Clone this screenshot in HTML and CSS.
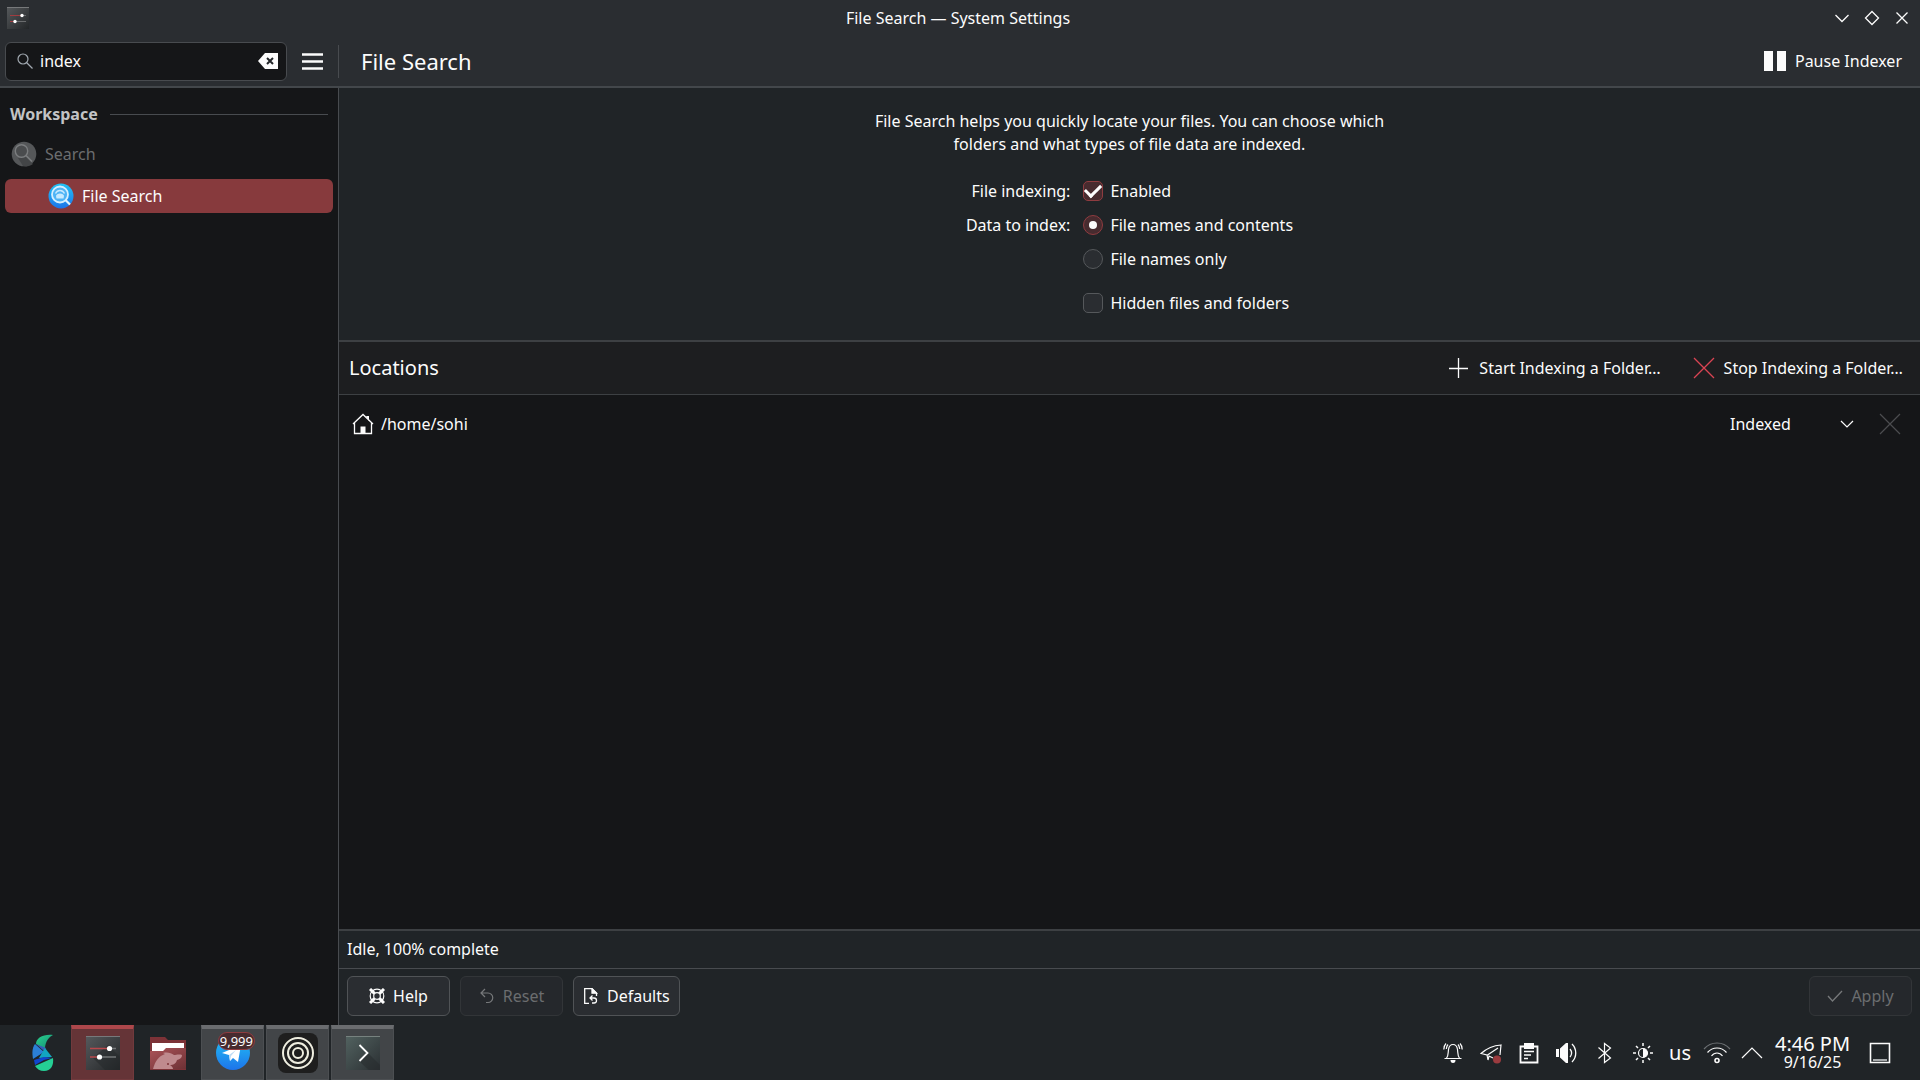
FILE: index.html
```html
<!DOCTYPE html>
<html lang="en">
<head>
  <meta charset="UTF-8" />
  <meta name="viewport" content="width=device-width, initial-scale=1.0"/>
  <title>File Search — System Settings</title>
  <link rel="stylesheet" href="styles.css">
</head>
<body>
  <header class="titlebar">
    <svg class="app-icon" width="24" height="24" viewBox="0 0 24 24">
      <defs>
        <linearGradient id="tile" x1="0" y1="0" x2="1" y2="1">
          <stop offset="0" stop-color="#56595c"/>
          <stop offset="1" stop-color="#232628"/>
        </linearGradient>
      </defs>
      <rect x="1" y="1" width="22" height="22" fill="url(#tile)"/>
      <path d="M1 1.500h22" stroke="#77797b"/>
      <path d="M4 9.500h12M4 15.500h5" stroke="#a03c40"/>
      <path d="M16 9.500h4M9 15.500h11" stroke="#6a6c6e"/>
      <circle cx="16" cy="9.500" r="1.700" fill="#fff"/>
      <circle cx="9" cy="15.500" r="1.700" fill="#fff"/>
    </svg>
    <h1>File Search — System Settings</h1>
    <div class="window-buttons">
      <button aria-label="Minimize"><svg width="16" height="16" viewBox="0 0 16 16"><path d="M1.500 5l6.500 6.500L14.500 5"/></svg></button>
      <button aria-label="Maximize"><svg width="16" height="16" viewBox="0 0 16 16"><path d="M8 1.500L14.500 8 8 14.500 1.500 8z"/></svg></button>
      <button aria-label="Close"><svg width="16" height="16" viewBox="0 0 16 16"><path d="M2.500 2.500l11 11M13.500 2.500l-11 11"/></svg></button>
    </div>
  </header>

  <div class="toolbar">
    <div class="toolbar-left">
      <div class="search-box">
        <svg width="16" height="16" viewBox="0 0 16 16" fill="none" stroke="#a1a9b1" stroke-width="1.200"><circle cx="6" cy="6" r="5"/><path d="M9.500 9.500l6 6"/></svg>
        <input type="text" value="index" aria-label="Search">
        <button aria-label="Clear search">
          <svg width="20" height="16" viewBox="0 0 20 16"><path d="M0 8l7-8h13v16H7z" fill="#fcfcfc"/><path d="M9 5l6 6M15 5l-6 6" stroke="#232629" stroke-width="2"/></svg>
        </button>
      </div>
      <button class="menu-button" aria-label="Menu">
        <svg width="22" height="18" viewBox="0 0 22 18"><path d="M1 2.500h21M1 9.500h21M1 16.500h21" stroke="#fcfcfc" stroke-width="2.600"/></svg>
      </button>
    </div>
    <div class="toolbar-right">
      <h2>File Search</h2>
      <button class="flat-button">
        <svg width="22" height="22" viewBox="0 0 22 22"><path d="M0 1h9v20H0zM13 1h9v20h-9z" fill="#fcfcfc"/></svg>
        Pause Indexer
      </button>
    </div>
  </div>

  <div class="window">
    <nav class="sidebar">
      <div class="section-title"><span>Workspace</span></div>
      <a href="#" class="nav-item disabled">
        <svg width="26" height="26" viewBox="0 0 26 26">
          <circle cx="13" cy="13" r="12.300" fill="#555759"/>
          <path d="M15 16l7 7c-3 2.500-7 2.800-10 2L7 17z" fill="#434547"/>
          <circle cx="10.500" cy="10" r="6.200" fill="#4a4c4e" stroke="#7b7d7f" stroke-width="1.400"/>
          <path d="M15 14.500l6 6" stroke="#7b7d7f" stroke-width="1.600"/>
        </svg>
        Search
      </a>
      <a href="#" class="nav-item child active">
        <svg width="26" height="26" viewBox="0 0 26 26">
          <defs>
            <linearGradient id="blue" x1="0" y1="0" x2="0" y2="1">
              <stop offset="0" stop-color="#22c3f5"/>
              <stop offset="1" stop-color="#1d74ea"/>
            </linearGradient>
          </defs>
          <circle cx="13" cy="13" r="12.500" fill="url(#blue)"/>
          <circle cx="12" cy="11.500" r="8" fill="#4fb4f5" stroke="#d5efff" stroke-width="1.800"/>
          <path d="M8 13c0-1.600 2-2.600 4-2.600s4 1 4 2.600l-.500 2.500h-7z" fill="#c7eaff"/>
          <path d="M7.500 10.500c1-2 2.500-3 4.500-3s3.500 1 4.500 3" fill="none" stroke="#c7eaff" stroke-width="1.400"/>
          <path d="M17.500 17l4.500 4.500" stroke="#e0f3ff" stroke-width="2.200"/>
        </svg>
        File Search
      </a>
    </nav>

    <main class="content">
      <section class="settings">
        <p>File Search helps you quickly locate your files. You can choose which folders and what types of file data are indexed.</p>
        <form class="options">
          <span class="caption">File indexing:</span>
          <label><input type="checkbox" checked> Enabled</label>
          <span class="caption">Data to index:</span>
          <label><input type="radio" name="data" checked> File names and contents</label>
          <label class="second"><input type="radio" name="data"> File names only</label>
          <label class="second spaced"><input type="checkbox"> Hidden files and folders</label>
        </form>
      </section>

      <section class="locations">
        <div class="locations-header">
          <h3>Locations</h3>
          <button class="flat-button">
            <svg width="22" height="22" viewBox="0 0 22 22"><path d="M10.500 1v20M1 11.500h19" stroke="#fcfcfc" stroke-width="1.300"/></svg>
            Start Indexing a Folder…
          </button>
          <button class="flat-button">
            <svg width="22" height="22" viewBox="0 0 22 22"><path d="M1 1l20 20M21 1L1 21" stroke="#da4453" stroke-width="1.300"/></svg>
            Stop Indexing a Folder…
          </button>
        </div>
        <div class="location-row">
          <svg width="22" height="22" viewBox="0 0 22 22">
            <path d="M2.500 9.500v11h17v-11M1 11l10-9.500L21 11" fill="none" stroke="#fcfcfc" stroke-width="1.300"/>
            <path d="M14 3h3v5zM8.500 13.500h5v7h-5z" fill="#fcfcfc"/>
          </svg>
          <span class="path">/home/sohi</span>
          <div class="select-box">
            <select aria-label="Indexing status">
              <option>Indexed</option>
              <option>Not indexed</option>
            </select>
            <svg width="14" height="14" viewBox="0 0 14 14"><path d="M1 4l6 6 6-6" fill="none" stroke="#fcfcfc" stroke-width="1.200"/></svg>
          </div>
          <button class="remove" aria-label="Remove" disabled>
            <svg width="22" height="22" viewBox="0 0 22 22"><path d="M1 1l20 20M21 1L1 21" stroke="#4b4d4f" stroke-width="1.200"/></svg>
          </button>
        </div>
      </section>

      <div class="status">Idle, 100% complete</div>

      <footer class="actions">
        <button>
          <svg width="16" height="16" viewBox="0 0 16 16" fill="none" stroke="#fcfcfc">
            <circle cx="8" cy="8" r="6.800" stroke-width="1.200"/>
            <circle cx="8" cy="8" r="3.300" stroke-width="1.200"/>
            <path d="M1 1l4.600 4.600M15 1l-4.600 4.600M1 15l4.600-4.600M15 15l-4.600-4.600" stroke-width="3"/>
          </svg>
          Help
        </button>
        <button disabled>
          <svg width="16" height="16" viewBox="0 0 16 16" fill="none" stroke="#77797b" stroke-width="1.200"><path d="M6 1L2 5l4 4M2 5h7a4.700 4.700 0 0 1 0 9.500H7"/></svg>
          Reset
        </button>
        <button>
          <svg width="16" height="16" viewBox="0 0 16 16" fill="none" stroke="#fcfcfc" stroke-width="1.300">
            <path d="M6 15.300H1.700V.700H9l4.500 4.500V8"/>
            <path d="M9 .700v4.500h4.500z" fill="#fcfcfc"/>
            <path d="M9.500 7.500L7 10l2.500 2.500M7 10h4a2.500 2.500 0 0 1 0 5H9"/>
          </svg>
          Defaults
        </button>
        <button class="apply" disabled>
          <svg width="16" height="16" viewBox="0 0 16 16" fill="none" stroke="#77797b" stroke-width="1.300"><path d="M1 8l4.500 5L15 3"/></svg>
          Apply
        </button>
      </footer>
    </main>
  </div>

  <div class="taskbar">
    <div class="tasks">
      <button class="launcher" aria-label="Application launcher">
        <svg width="24" height="38" viewBox="0 0 24 38">
          <defs>
            <linearGradient id="drop" x1="0" y1="0" x2="1" y2="1">
              <stop offset="0" stop-color="#2bd08c"/>
              <stop offset="1" stop-color="#128f78"/>
            </linearGradient>
          </defs>
          <path d="M22 1C12 0 5 4 5 10l9 5c0-5 2-11 8-14z" fill="url(#drop)"/>
          <path d="M4 10c-3 4-3 9-2 15L13 18z" fill="#2b7fd6"/>
          <path d="M5 10l8 7 2-3z" fill="#3560b8"/>
          <path d="M14 14l7 9-13 1z" fill="#12a5c0"/>
          <path d="M3 26l10-3 8 1-8 2-9 5z" fill="#0f46cf"/>
          <path d="M22 24c1 7-2 13-9 13-4 0-7-2-9-5z" fill="#25cf95"/>
        </svg>
      </button>
      <button class="task active" aria-label="System Settings">
        <svg width="36" height="36" viewBox="0 0 36 36">
          <rect x="1" y="1" width="34" height="34" fill="url(#tile)"/>
          <path d="M8 23l15-13 12 12v13H20z" fill="#242729" opacity=".5"/>
          <path d="M1 1.500h34" stroke="#77797b"/>
          <path d="M5 13.500h20M5 22h9" stroke="#b8484c" stroke-width="1.500"/>
          <path d="M25 13.500h6M14 22h17" stroke="#737577" stroke-width="1.500"/>
          <circle cx="24.500" cy="13.500" r="2.600" fill="#fff"/>
          <circle cx="14.500" cy="22" r="2.600" fill="#fff"/>
        </svg>
      </button>
      <button class="task plain" aria-label="Dolphin">
        <svg width="38" height="36" viewBox="0 0 38 36">
          <defs>
            <linearGradient id="folder" x1="0" y1="0" x2="1" y2="1">
              <stop offset="0" stop-color="#ac5459"/>
              <stop offset="1" stop-color="#6d3135"/>
            </linearGradient>
          </defs>
          <path d="M1 2h15l3 3h18v15H1z" fill="#7c3237"/>
          <path d="M3 8h32v12H3z" fill="#fff"/>
          <path d="M1 16h13l3-3h20v21H1z" fill="url(#folder)"/>
          <path d="M4 34c2-8 6-13 12-15l-2-1c5-1 8 0 11 2 2 0 5-1 8 0 0 3-2 4-5 5-1 4-4 5-7 5 2 1 3 3 3 4z" fill="#bf8a8e"/>
          <circle cx="19" cy="29" r="1" fill="#7c3237"/>
          <path d="M1 34.500h36" stroke="#7c3237"/>
        </svg>
      </button>
      <button class="task" aria-label="Telegram">
        <svg width="36" height="36" viewBox="0 0 36 36">
          <circle cx="18" cy="18" r="17" fill="url(#blue)"/>
          <path d="M7 18l19-8-3 17-5-4-3 3-1-6z" fill="#fff"/>
          <path d="M14 20l7-5-5 6-1 5z" fill="#bfdcf5"/>
        </svg>
        <span class="badge">9,999</span>
      </button>
      <button class="task" aria-label="Rings">
        <svg width="40" height="40" viewBox="0 0 40 40" fill="none" stroke="#efeee0" stroke-width="2">
          <rect width="40" height="40" rx="8" fill="#1e1e1e" stroke="none"/>
          <circle cx="20" cy="20" r="15"/>
          <circle cx="20" cy="20" r="10"/>
          <circle cx="20" cy="20" r="5"/>
        </svg>
      </button>
      <button class="task" aria-label="Konsole">
        <svg width="36" height="36" viewBox="0 0 36 36">
          <defs>
            <linearGradient id="term" x1="0" y1="0" x2="1" y2="1">
              <stop offset="0" stop-color="#526260"/>
              <stop offset="1" stop-color="#2b3033"/>
            </linearGradient>
          </defs>
          <rect x="1" y="1" width="34" height="34" fill="url(#term)"/>
          <path d="M14 26l9-8 12 12v5H24z" fill="#25292b" opacity=".5"/>
          <path d="M1 1.500h34" stroke="#77827f"/>
          <path d="M14.500 10l8 8-8 8" fill="none" stroke="#fff" stroke-width="1.800"/>
        </svg>
      </button>
    </div>

    <div class="tray">
      <button aria-label="Notifications">
        <svg width="22" height="22" viewBox="0 0 22 22">
          <path d="M2.500 16.500h17M4.500 16c2-2 1.500-5 2-8.500C7 4 9 2.500 11 2.500s4 1.500 4.500 5c.500 3.500 0 6.500 2 8.500M4 1.500C2.500 3 1.800 5 1.800 7.500M6 2.500C5 3.500 4.500 5 4.300 7M18 1.500c1.500 1.500 2.200 3.500 2.200 6M16 2.500c1 1 1.500 2.500 1.700 4.500"/>
          <path class="solid" d="M8.500 18h5a2.500 3 0 0 1-5 0z"/>
        </svg>
      </button>
      <button aria-label="Telegram">
        <svg width="22" height="22" viewBox="0 0 22 22">
          <path d="M13 16l-4-2-1 4-1-5-6-1.500C6 7 13 3.500 21 3l-1 10M7.500 13L18 6"/>
          <circle cx="17" cy="17.500" r="4" fill="#9a3b3f" stroke="none"/>
        </svg>
      </button>
      <button aria-label="Clipboard">
        <svg width="22" height="22" viewBox="0 0 22 22">
          <path d="M2.500 4.500h17v16h-17z" stroke-width="1.800"/>
          <path class="solid" d="M6 1h10v6H6z"/>
          <path d="M6 9.500h10M6 13h7M6 16.500h4" stroke-width="1.400"/>
        </svg>
      </button>
      <button aria-label="Volume">
        <svg width="22" height="22" viewBox="0 0 22 22">
          <path class="solid" d="M0 7h3v8H0zM4 6.500L10 1h2v20h-2l-6-5.500z"/>
          <path d="M14 7c2 2.500 2 5.500 0 8M16 2c5 5 5 13 0 18" stroke-width="1.300"/>
        </svg>
      </button>
      <button aria-label="Bluetooth">
        <svg width="22" height="22" viewBox="0 0 22 22"><path d="M4.500 5.500l12 10.500-6 4.500v-19l6 4.500-12 10.500"/></svg>
      </button>
      <button aria-label="Brightness">
        <svg width="22" height="22" viewBox="0 0 22 22">
          <circle cx="11" cy="11" r="4.500"/>
          <path class="solid" d="M11 6.500a4.500 4.500 0 0 1 0 9z"/>
          <path d="M11 1v3M11 18v3M1 11h3M18 11h3M4 4l2 2M16 16l2 2M18 4l-2 2M6 16l-2 2" stroke-width="1.500"/>
        </svg>
      </button>
      <button class="layout">us</button>
      <button aria-label="Wi-Fi">
        <svg width="28" height="22" viewBox="0 0 28 22">
          <path d="M1 7C8-1 20-1 27 7" stroke="#6c7073"/>
          <path d="M4.500 10.500c5-6 14-6 19 0M8.500 14c3-4 8-4 11 0"/>
          <circle cx="14" cy="18.500" r="2" stroke-width="1.600"/>
        </svg>
      </button>
      <button class="expand" aria-label="Show hidden icons">
        <svg width="22" height="22" viewBox="0 0 22 22"><path d="M1 16L11 6l10 10"/></svg>
      </button>
      <button class="clock"><span class="time">4:46 PM</span><span class="date">9/16/25</span></button>
      <button class="desktop" aria-label="Show desktop">
        <svg width="22" height="22" viewBox="0 0 22 22"><path d="M1.500 1.500h19v19h-19z" stroke-width="1.600"/><path d="M4 18h14" stroke="#a8abad" stroke-width="2"/></svg>
      </button>
    </div>
  </div>
</body>
</html>
```
FILE: styles.css
```css
:root {
  --header: #2a2d31;
  --panel: #202427;
  --view: #151618;
  --line: #484b4f;
  --text: #fcfcfc;
  --muted: #6b6d6f;
  --accent: #873a3d;
}

* {
  margin: 0;
  padding: 0;
  box-sizing: border-box;
}

body {
  display: flex;
  flex-direction: column;
  height: 100vh;
  background-color: var(--panel);
  color: var(--text);
  font-family: "Noto Sans", sans-serif;
  font-size: 16px;
  line-height: 22px;
}

button,
input,
select {
  font: inherit;
  color: inherit;
  background: none;
  border: none;
}

button {
  display: flex;
  align-items: center;
  justify-content: center;
}

svg {
  flex-shrink: 0;
}

h1,
h2,
h3 {
  font-weight: 400;
}

/* Title bar and toolbar */
.titlebar {
  display: grid;
  grid-template-columns: 1fr auto 1fr;
  align-items: center;
  height: 36px;
  padding: 0 10px 0 6px;
  background-color: var(--header);
}

.titlebar h1 {
  font-size: 16px;
}

.window-buttons {
  display: flex;
  justify-content: flex-end;
  gap: 14px;
}

.window-buttons svg {
  fill: none;
  stroke: var(--text);
  stroke-width: 1.3;
}

.toolbar {
  display: flex;
  height: 52px;
  background-color: var(--header);
  border-bottom: 2px solid #43474b;
}

.toolbar-left {
  display: flex;
  align-items: center;
  gap: 14px;
  width: 338px;
  padding-left: 5px;
}

.search-box {
  display: flex;
  align-items: center;
  gap: 7px;
  width: 282px;
  height: 39px;
  padding: 0 8px 0 11px;
  background-color: var(--view);
  border: 1px solid var(--line);
  border-radius: 6px;
}

.search-box input {
  flex: 1;
  min-width: 0;
  outline: none;
}

.toolbar-right {
  display: flex;
  flex: 1;
  align-items: center;
  justify-content: space-between;
  height: 33px;
  margin-top: 9px;
  padding: 0 18px 1px 22px;
  border-left: 1px solid var(--line);
}

.toolbar h2 {
  font-size: 22px;
}

.flat-button {
  gap: 9px;
}

/* Sidebar */
.window {
  display: flex;
  flex: 1;
  min-height: 0;
}

.sidebar {
  width: 339px;
  padding: 8px 5px;
  background-color: var(--view);
  border-right: 1px solid var(--line);
}

.section-title {
  display: flex;
  align-items: center;
  gap: 12px;
  height: 36px;
  padding: 0 5px;
  color: #c3c4c5;
  font-weight: 700;
}

.section-title::after {
  content: "";
  flex: 1;
  height: 1px;
  background-color: var(--line);
}

.nav-item {
  display: flex;
  align-items: center;
  gap: 8px;
  height: 34px;
  margin-top: 5px;
  padding-left: 6px;
  border-radius: 6px;
  color: var(--text);
  text-decoration: none;
}

.nav-item.disabled {
  color: var(--muted);
}

.nav-item.child {
  margin-top: 8px;
  padding-left: 43px;
}

.nav-item.active {
  background-color: var(--accent);
}

/* Content */
.content {
  display: flex;
  flex: 1;
  flex-direction: column;
}

.settings {
  display: flex;
  flex-direction: column;
  align-items: center;
  gap: 23px;
  height: 252px;
  padding-top: 22px;
}

.settings p {
  max-width: 540px;
  line-height: 23px;
  text-align: center;
}

.options {
  display: grid;
  grid-template-columns: auto auto;
  align-items: center;
  gap: 10px 13px;
}

.caption {
  text-align: right;
}

.options label {
  display: flex;
  align-items: center;
  gap: 7px;
  height: 24px;
}

.options .second {
  grid-column: 2;
}

.options .spaced {
  margin-top: 10px;
}

.options input {
  display: grid;
  place-items: center;
  width: 20px;
  height: 20px;
  appearance: none;
  background-color: #2a2d31;
  border: 1px solid #55585b;
  border-radius: 5px;
}

.options input[type="radio"] {
  border-radius: 50%;
}

.options input:checked {
  background-color: #472b2f;
  border-color: #8f3c40;
}

.options input[type="checkbox"]:checked::before {
  content: "";
  width: 13px;
  height: 7px;
  margin-bottom: 4px;
  border: solid var(--text);
  border-width: 0 0 3px 3px;
  transform: rotate(-45deg);
}

.options input[type="radio"]:checked::before {
  content: "";
  width: 8px;
  height: 8px;
  border-radius: 50%;
  background-color: var(--text);
}

.locations {
  flex: 1;
  background-color: var(--view);
  border-top: 2px solid #3d4043;
  border-bottom: 2px solid #3d4043;
}

.locations-header {
  display: flex;
  align-items: center;
  gap: 32px;
  height: 53px;
  padding: 0 17px 0 10px;
  background-color: #1d1e20;
  border-bottom: 1px solid #3d4043;
}

.locations h3 {
  flex: 1;
  font-size: 20px;
}

.location-row {
  display: flex;
  align-items: center;
  height: 58px;
  padding: 0 19px 0 13px;
}

.path {
  flex: 1;
  padding-left: 7px;
}

.select-box {
  display: grid;
  align-items: center;
  width: 124px;
  margin-right: 25px;
}

.select-box select,
.select-box svg {
  grid-area: 1 / 1;
}

.select-box select {
  appearance: none;
}

.select-box svg {
  justify-self: end;
  pointer-events: none;
}

.status {
  height: 38px;
  padding: 7px 8px;
  border-bottom: 1px solid var(--line);
}

.actions {
  display: flex;
  align-items: center;
  gap: 10px;
  height: 56px;
  padding: 0 8px 2px;
}

.actions button {
  gap: 8px;
  min-width: 103px;
  height: 40px;
  padding: 0 9px;
  background-color: var(--header);
  border: 1px solid #505356;
  border-radius: 6px;
}

.actions button:disabled {
  background-color: #25282c;
  border-color: #323538;
  color: var(--muted);
}

.actions .apply {
  margin-left: auto;
}

/* Taskbar */
.taskbar {
  display: flex;
  justify-content: space-between;
  height: 55px;
  padding: 0 26px 0 16px;
}

.tasks {
  display: flex;
  gap: 2px;
}

.launcher {
  width: 53px;
}

.task {
  position: relative;
  width: 63px;
  padding-bottom: 2px;
  background-color: #424548;
  border: 1px solid #4c4f52;
  border-top: 4px solid #6a6c6f;
}

.task.active {
  background-color: #653437;
  border-color: #713a3d;
  border-top-color: #ad474b;
}

.task.plain {
  background: none;
  border-color: transparent;
}

.badge {
  position: absolute;
  top: 3px;
  right: 8px;
  padding: 0 1px;
  background-color: #472b2f;
  border: 1px solid #8f3c40;
  border-radius: 9px;
  font-size: 13px;
  line-height: 16px;
}

.tray {
  display: flex;
}

.tray button {
  width: 38px;
}

.tray svg {
  fill: none;
  stroke: var(--text);
  stroke-width: 1.2;
}

.tray .solid {
  fill: var(--text);
  stroke: none;
}

.tray .layout {
  width: 36px;
  font-size: 20px;
}

.tray .expand {
  width: 32px;
}

.tray .clock {
  flex-direction: column;
  width: 89px;
  margin-right: 9px;
}

.time {
  font-size: 20px;
  line-height: 18px;
}

.date {
  font-size: 16px;
  line-height: 18px;
}

.tray .desktop {
  width: 28px;
}
```
